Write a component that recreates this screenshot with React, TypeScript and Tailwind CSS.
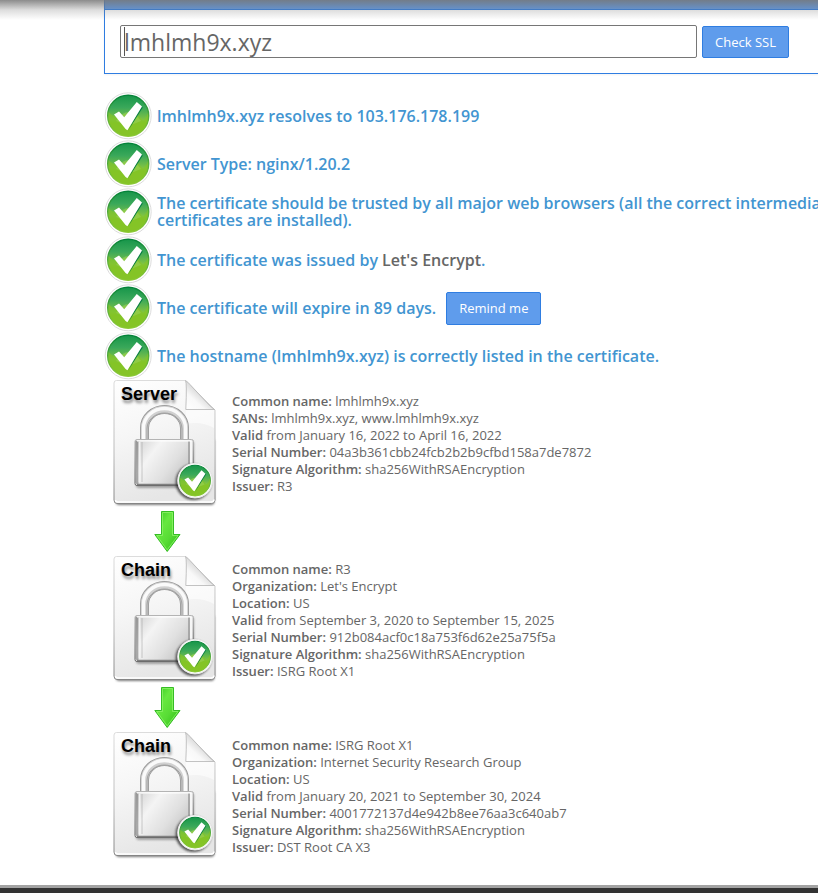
import { useId, type ReactNode } from "react";

const FONT = "font-['Open_Sans','Noto_Sans',sans-serif]";

function CheckMark({ id }: { id: string }) {
  return (
    <>
      <defs>
        <linearGradient id={`${id}g`} x1="0" y1="0" x2="0" y2="1">
          <stop offset="0" stopColor="#17964a" />
          <stop offset="0.3" stopColor="#3aa85a" />
          <stop offset="0.6" stopColor="#80c343" />
          <stop offset="0.68" stopColor="#82c326" />
          <stop offset="1" stopColor="#88c425" />
        </linearGradient>
        <linearGradient id={`${id}r`} x1="0" y1="0" x2="0" y2="1">
          <stop offset="0" stopColor="#04833a" />
          <stop offset="0.5" stopColor="#4fa83a" />
          <stop offset="1" stopColor="#8fca3a" />
        </linearGradient>
      </defs>
      <circle cx="24.2" cy="23.8" r="23" fill="#fff" stroke="#dcdcdc" strokeWidth="1" />
      <circle cx="24.2" cy="23.8" r="20.5" fill={`url(#${id}g)`} stroke={`url(#${id}r)`} strokeWidth="1.4" />
      <path d="M4.4 20 Q12 28 20 22 Q31 17 39 29 Q43 25 44 21 A20 20 0 0 1 4.4 27Z" fill="#84c526" opacity="0.65" />
      <path d="M12 29 Q24 11 37 29 Q24 36 12 29Z" fill="#a6d66c" opacity="0.4" />
      <path d="M24.2 38.6 L38.8 15.6 L37 14Z" fill="#087d43" />
      <path d="M10 22.5 L15 19.6 L20.2 25.3 L32.8 10 L38 14.6 L23.4 38.2 L21.6 37Z" fill="#fff" />
    </>
  );
}

function CheckIcon() {
  const id = useId();
  return (
    <svg className="size-12 shrink-0" viewBox="0 0 48 48" aria-hidden="true">
      <CheckMark id={id} />
    </svg>
  );
}

function CertIcon({ label }: { label: string }) {
  const id = useId();
  return (
    <svg className="size-32 shrink-0" viewBox="0 0 128 128" role="img" aria-label={label}>
      <defs>
        <linearGradient id={`${id}p`} x1="0" y1="0" x2="0.3" y2="1">
          <stop offset="0" stopColor="#ffffff" />
          <stop offset="0.45" stopColor="#f6f6f6" />
          <stop offset="1" stopColor="#e6e6e6" />
        </linearGradient>
        <linearGradient id={`${id}e`} x1="0" y1="0" x2="0" y2="1">
          <stop offset="0" stopColor="#dcdcdc" />
          <stop offset="0.6" stopColor="#b8b8b8" />
          <stop offset="1" stopColor="#858585" />
        </linearGradient>
        <linearGradient id={`${id}f`} x1="0" y1="1" x2="0.5" y2="0.45">
          <stop offset="0" stopColor="#fff" />
          <stop offset="0.6" stopColor="#f8f8f8" />
          <stop offset="1" stopColor="#dcdcdc" />
        </linearGradient>
        <linearGradient id={`${id}b`} x1="0" y1="0" x2="1" y2="0.6">
          <stop offset="0" stopColor="#cecece" />
          <stop offset="0.35" stopColor="#f4f4f4" />
          <stop offset="0.7" stopColor="#e0e0e0" />
          <stop offset="1" stopColor="#c4c4c4" />
        </linearGradient>
        <linearGradient id={`${id}s`} x1="0" y1="0" x2="0" y2="1">
          <stop offset="0" stopColor="#b4b4b4" />
          <stop offset="1" stopColor="#666" />
        </linearGradient>
        <filter id={`${id}d`} x="-30%" y="-30%" width="160%" height="180%">
          <feGaussianBlur stdDeviation="1.3" />
        </filter>
      </defs>
      <path d="M12 60 V122 Q12 125 15 125 H107 Q110.5 125 110.5 121 V60Z" fill="#444" opacity="0.7" filter={`url(#${id}d)`} />
      <path d="M12.5 0.5 H81.5 L111 30 V120 Q111 123.5 107.5 123.5 H13 Q10 123.5 10 120 V3 Q10 0.5 12.5 0.5Z" fill={`url(#${id}p)`} stroke={`url(#${id}e)`} strokeWidth="1" />
      <path d="M11.5 120 Q11.5 122 14 122 H107 Q110 122 110 119.5" fill="none" stroke="#fff" strokeWidth="1.4" />
      <path d="M82 30 H110 V48 Q97 41 82 44Z" fill="#fff" opacity="0.55" />
      <path d="M81.5 0.5 Q83 3 81.8 29.5 H110.5 Q108 28 105 25 L86 4.5 Q84 2 81.5 0.5Z" fill={`url(#${id}f)`} stroke="#b4b4b4" strokeWidth="0.8" />

      <path d="M40.5 61 V48 A20 18.5 0 0 1 80.5 48 V61" fill="none" stroke="#949494" strokeWidth="9" />
      <path d="M40.5 61 V48 A20 18.5 0 0 1 80.5 48 V61" fill="none" stroke="#d0d0d0" strokeWidth="7.4" />
      <path d="M39.5 61 V48 A21 19.5 0 0 1 81.5 48 V61" fill="none" stroke="#fafafa" strokeWidth="3.4" />
      <path d="M43 61 V49 A17.5 16 0 0 1 78 49 V61" fill="none" stroke="#a0a0a0" strokeWidth="1" />

      <path d="M33 62 H90 V105 Q90 108 87 108 H35 Q32 108 32 105Z" fill="#333" opacity="0.4" filter={`url(#${id}d)`} />
      <rect x="31" y="59.5" width="58.5" height="46" rx="2" fill={`url(#${id}b)`} stroke={`url(#${id}s)`} strokeWidth="1" />
      <path d="M31.5 61 H34.5 V104 H32.5 Q31.5 104 31.5 102Z" fill="#5d5d5d" opacity="0.5" />
      <path d="M35.5 62 V102" stroke="#f2f2f2" strokeWidth="1.6" />
      <path d="M38 62 V102" stroke="#a8a8a8" strokeWidth="1" opacity="0.6" />
      <path d="M85 61 V102" stroke="#8a8a8a" strokeWidth="1.2" />
      <path d="M87 61 V102" stroke="#f6f6f6" strokeWidth="2" />
      <path d="M33 60.8 H87.5" stroke="#fff" strokeWidth="1.2" />
      <path d="M33 104.5 H88" stroke="#808080" strokeWidth="1.6" />

      <circle cx="89.5" cy="102" r="18" fill="#222" opacity="0.7" filter={`url(#${id}d)`} />
      <g transform="translate(72.9 82.7) scale(0.75)">
        <circle cx="24.2" cy="24" r="23.5" fill="#fff" />
        <CheckMark id={`${id}c`} />
      </g>

      <text
        x="17"
        y="20"
        fill="#000"
        className="font-['Liberation_Sans',Arial,sans-serif] text-lg font-bold [text-shadow:1px_3px_3px_rgba(0,0,0,0.45)]"
      >
        {label}
      </text>
    </svg>
  );
}

function DownArrow() {
  const id = useId();
  return (
    <svg className="h-12 w-32" viewBox="0 0 128 48" aria-hidden="true">
      <defs>
        <linearGradient id={`${id}a`} x1="0" y1="0" x2="1" y2="1">
          <stop offset="0" stopColor="#2fc51c" />
          <stop offset="0.35" stopColor="#66e83f" />
          <stop offset="0.6" stopColor="#58dc35" />
          <stop offset="1" stopColor="#26b90f" />
        </linearGradient>
      </defs>
      <path d="M57.5 3.5 H69.5 V26.5 H76 L63.2 43.5 L50.8 26.5 H57.5Z" fill={`url(#${id}a)`} stroke="#35bd24" strokeWidth="1" />
      <path d="M58.5 4.5 H68.5 V27.5 H74 L63.2 41.8 L52.8 27.5 H58.5Z" fill="none" stroke="#8df26a" strokeWidth="0.8" />
    </svg>
  );
}

const BUTTON =
  "rounded-xs border border-[#2f7de1] bg-[#5f9cec] text-[13px] leading-4 font-normal text-white px-3 cursor-pointer";

function CheckRow({ children }: { children: ReactNode }) {
  return (
    <li className="flex h-12 items-center gap-[5px]">
      <CheckIcon />
      <div className="flex items-center text-base leading-[17px] font-semibold text-[#4295d1]">{children}</div>
    </li>
  );
}

type Cert = { label: string; fields: [string, string][] };

const certs: Cert[] = [
  {
    label: "Server",
    fields: [
      ["Common name:", "lmhlmh9x.xyz"],
      ["SANs:", "lmhlmh9x.xyz, www.lmhlmh9x.xyz"],
      ["Valid", "from January 16, 2022 to April 16, 2022"],
      ["Serial Number:", "04a3b361cbb24fcb2b2b9cfbd158a7de7872"],
      ["Signature Algorithm:", "sha256WithRSAEncryption"],
      ["Issuer:", "R3"],
    ],
  },
  {
    label: "Chain",
    fields: [
      ["Common name:", "R3"],
      ["Organization:", "Let's Encrypt"],
      ["Location:", "US"],
      ["Valid", "from September 3, 2020 to September 15, 2025"],
      ["Serial Number:", "912b084acf0c18a753f6d62e25a75f5a"],
      ["Signature Algorithm:", "sha256WithRSAEncryption"],
      ["Issuer:", "ISRG Root X1"],
    ],
  },
  {
    label: "Chain",
    fields: [
      ["Common name:", "ISRG Root X1"],
      ["Organization:", "Internet Security Research Group"],
      ["Location:", "US"],
      ["Valid", "from January 20, 2021 to September 30, 2024"],
      ["Serial Number:", "4001772137d4e942b8ee76aa3c640ab7"],
      ["Signature Algorithm:", "sha256WithRSAEncryption"],
      ["Issuer:", "DST Root CA X3"],
    ],
  },
];

export default function App() {
  return (
    <div className={`relative flex min-h-screen flex-col overflow-hidden bg-white text-[#666] ${FONT}`}>
      <div className="pointer-events-none absolute inset-x-0 top-0 h-5 bg-linear-to-b from-[#777]/85 via-[#777]/25 to-transparent" />
      <main className="ml-[104px] min-w-[800px] grow">
        <section className="border border-t-0 border-[#2f7de1] shadow-xs">
          <div className="h-[10px] border-b border-[#2f7de1] bg-[#5f9cec]" />
          <form className="flex items-end gap-[5px] p-[15px]" onSubmit={(e) => e.preventDefault()}>
            <div className="relative">
              <input
                aria-label="Server hostname"
                type="text"
                defaultValue="lmhlmh9x.xyz"
                className="block h-[33px] w-[577px] rounded-xs border border-[#767676] bg-white px-[3px] text-[23px] leading-7 font-normal"
              />
              <span className="absolute top-[2px] left-1 h-[29px] w-px bg-[#555]" />
            </div>
            <button type="submit" className={`${BUTTON} h-8`}>Check SSL</button>
          </form>
        </section>

        <ul className="mt-[18px] pr-4">
          <CheckRow>lmhlmh9x.xyz resolves to 103.176.178.199</CheckRow>
          <CheckRow>Server Type: nginx/1.20.2</CheckRow>
          <CheckRow>
            The certificate should be trusted by all major web browsers (all the correct intermediate certificates are
            installed).
          </CheckRow>
          <CheckRow>
            <p>The certificate was issued by <span className="text-[#666]">Let's Encrypt</span>.</p>
          </CheckRow>
          <CheckRow>
            <p>The certificate will expire in 89 days.</p>
            <button type="button" className={`${BUTTON} ml-[10px] h-[33px]`}>Remind me</button>
          </CheckRow>
          <CheckRow>The hostname (lmhlmh9x.xyz) is correctly listed in the certificate.</CheckRow>
        </ul>

        <ol>
          {certs.map((cert, i) => (
            <li key={i}>
              {i > 0 && <DownArrow />}
              <div className="flex items-center">
                <CertIcon label={cert.label} />
                <div className="text-[13px] leading-[17px]">
                  {cert.fields.map(([name, value]) => (
                    <p key={name}>
                      <b className="font-semibold">{name}</b> {value}
                    </p>
                  ))}
                </div>
              </div>
            </li>
          ))}
        </ol>
      </main>
      <footer className="mt-6 h-2 border-t-3 border-[#a3a3a3] bg-[#333]" />
    </div>
  );
}
